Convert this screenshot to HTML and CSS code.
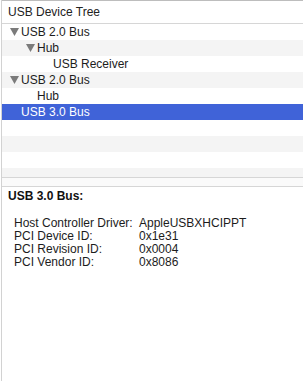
FILE: index.html
```html
<!DOCTYPE html>
<html lang="en">
<head>
    <meta charset="UTF-8" />
    <title>System Information</title>
    <link rel="stylesheet" href="styles.css">
</head>
<body>
    <div class="pane">
        <section class="tree">
            <div class="tree-head">USB Device Tree</div>
            <ul class="rows">
                <li class="lvl0"><span class="tog"><svg width="9" height="8" viewBox="0 0 9 8"><polygon points="0,0 9,0 4.5,8" /></svg></span>USB 2.0 Bus</li>
                <li class="lvl1"><span class="tog"><svg width="9" height="8" viewBox="0 0 9 8"><polygon points="0,0 9,0 4.5,8" /></svg></span>Hub</li>
                <li class="lvl2"><span class="tog"></span>USB Receiver</li>
                <li class="lvl0"><span class="tog"><svg width="9" height="8" viewBox="0 0 9 8"><polygon points="0,0 9,0 4.5,8" /></svg></span>USB 2.0 Bus</li>
                <li class="lvl1"><span class="tog"></span>Hub</li>
                <li class="lvl0 sel"><span class="tog"></span>USB 3.0 Bus</li>
                <li></li>
                <li></li>
                <li></li>
                <li></li>
            </ul>
        </section>
        <div class="split"></div>
        <section class="detail">
            <h2>USB 3.0 Bus:</h2>
            <dl class="props">
                <dt>Host Controller Driver:</dt><dd>AppleUSBXHCIPPT</dd>
                <dt>PCI Device ID:</dt><dd>0x1e31</dd>
                <dt>PCI Revision ID:</dt><dd>0x0004</dd>
                <dt>PCI Vendor ID:</dt><dd>0x8086</dd>
            </dl>
        </section>
    </div>
</body>
</html>
```

FILE: styles.css
```css
:root {
    --line: #d6d6d6;
    --stripe: #f4f4f4;
    --sel: #4063d8;
    --text: #1c1c1c
}

* {
    box-sizing: border-box
}

body {
    margin: 0;
    font-family: "Liberation Sans", Arial, sans-serif;
    font-size: 12px;
    color: var(--text);
    background: #fff
}

.pane {
    margin-left: 1px;
    border-left: 1px solid #d2d2d2;
    height: 381px;
    display: flex;
    flex-direction: column
}

.tree {
    border-top: 1px solid #bdbdbd
}

.tree-head {
    height: 23px;
    line-height: 22px;
    padding-left: 6px;
    border-bottom: 1px solid var(--line);
    color: #222
}

.rows {
    list-style: none;
    margin: 0;
    padding: 0;
    height: 153px;
    overflow: hidden
}

.rows li {
    height: 16px;
    line-height: 16px;
    display: flex;
    align-items: center;
    white-space: nowrap
}

.rows li:nth-child(even) {
    background: var(--stripe)
}

.rows li.sel {
    background: var(--sel);
    color: #fff
}

.lvl0 {
    padding-left: 8px
}

.lvl1 {
    padding-left: 24px
}

.lvl2 {
    padding-left: 40px
}

.tog {
    width: 11px;
    height: 16px;
    display: flex;
    align-items: center
}

.tog svg {
    fill: #7b7b7b;
    display: block
}

.split {
    height: 10px;
    border-top: 1px solid var(--line);
    border-bottom: 1px solid var(--line);
    background: #fafafa
}

.detail {
    flex: 1;
    padding: 1px 6px 0
}

.detail h2 {
    margin: 0;
    font-size: 12px;
    line-height: 16px;
    font-weight: bold;
    color: #111
}

.props {
    margin: 13px 0 0 6px;
    display: grid;
    grid-template-columns: 125px auto;
    line-height: 13px
}

.props dt,
.props dd {
    margin: 0
}
```
